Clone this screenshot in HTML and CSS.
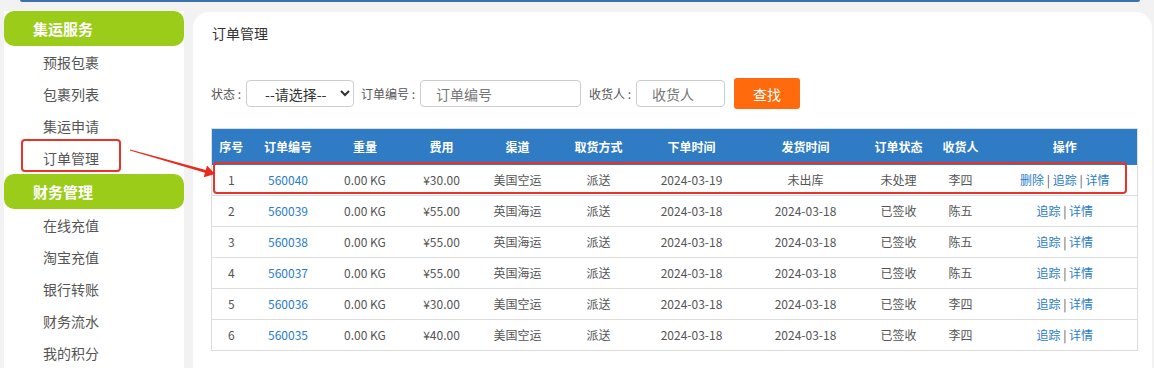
FILE: index.html
```
<!DOCTYPE html>
<html lang="zh-CN">
<head>
    <meta charset="UTF-8">
    <meta name="viewport" content="width=device-width, initial-scale=1.0">
    <title>订单管理</title>
    <link rel="stylesheet" href="styles.css">
</head>
<body>

    <div class="topbar"></div>

    <div class="wrap">
        <!-- left menu -->
        <div class="sidebar">
            <div class="menu-title">集运服务</div>
            <a class="menu-item">预报包裹</a>
            <a class="menu-item">包裹列表</a>
            <a class="menu-item">集运申请</a>
            <a class="menu-item">订单管理</a>
            <div class="menu-title">财务管理</div>
            <a class="menu-item">在线充值</a>
            <a class="menu-item">淘宝充值</a>
            <a class="menu-item">银行转账</a>
            <a class="menu-item">财务流水</a>
            <a class="menu-item">我的积分</a>

            <div class="mark mark-menu"></div>
        </div>

        <!-- content -->
        <div class="main">
            <div class="page-title">订单管理</div>

            <div class="search">
                <span class="label">状态 :</span>
                <select class="field select">
                    <option>--请选择--</option>
                </select>
                <span class="label">订单编号 :</span>
                <input class="field input-no" type="text" placeholder="订单编号">
                <span class="label">收货人 :</span>
                <input class="field input-name" type="text" placeholder="收货人">
                <button class="btn-search">查找</button>
            </div>

            <div class="table-box">
                <table class="orders">
                    <colgroup>
                        <col style="width:39px">
                        <col style="width:75px">
                        <col style="width:79px">
                        <col style="width:74px">
                        <col style="width:78px">
                        <col style="width:84px">
                        <col style="width:102px">
                        <col style="width:126px">
                        <col style="width:60px">
                        <col style="width:64px">
                        <col>
                    </colgroup>
                    <thead>
                        <tr>
                            <th>序号</th>
                            <th>订单编号</th>
                            <th>重量</th>
                            <th>费用</th>
                            <th>渠道</th>
                            <th>取货方式</th>
                            <th>下单时间</th>
                            <th>发货时间</th>
                            <th>订单状态</th>
                            <th>收货人</th>
                            <th>操作</th>
                        </tr>
                    </thead>
                    <tbody>
                        <tr>
                            <td>1</td>
                            <td><a class="link">560040</a></td>
                            <td>0.00 KG</td>
                            <td>¥30.00</td>
                            <td>美国空运</td>
                            <td>派送</td>
                            <td>2024-03-19</td>
                            <td>未出库</td>
                            <td>未处理</td>
                            <td>李四</td>
                            <td><a class="link">删除</a> | <a class="link">追踪</a> | <a class="link">详情</a></td>
                        </tr>
                        <tr>
                            <td>2</td>
                            <td><a class="link">560039</a></td>
                            <td>0.00 KG</td>
                            <td>¥55.00</td>
                            <td>英国海运</td>
                            <td>派送</td>
                            <td>2024-03-18</td>
                            <td>2024-03-18</td>
                            <td>已签收</td>
                            <td>陈五</td>
                            <td><a class="link">追踪</a> | <a class="link">详情</a></td>
                        </tr>
                        <tr>
                            <td>3</td>
                            <td><a class="link">560038</a></td>
                            <td>0.00 KG</td>
                            <td>¥55.00</td>
                            <td>英国海运</td>
                            <td>派送</td>
                            <td>2024-03-18</td>
                            <td>2024-03-18</td>
                            <td>已签收</td>
                            <td>陈五</td>
                            <td><a class="link">追踪</a> | <a class="link">详情</a></td>
                        </tr>
                        <tr>
                            <td>4</td>
                            <td><a class="link">560037</a></td>
                            <td>0.00 KG</td>
                            <td>¥55.00</td>
                            <td>英国海运</td>
                            <td>派送</td>
                            <td>2024-03-18</td>
                            <td>2024-03-18</td>
                            <td>已签收</td>
                            <td>陈五</td>
                            <td><a class="link">追踪</a> | <a class="link">详情</a></td>
                        </tr>
                        <tr>
                            <td>5</td>
                            <td><a class="link">560036</a></td>
                            <td>0.00 KG</td>
                            <td>¥30.00</td>
                            <td>美国空运</td>
                            <td>派送</td>
                            <td>2024-03-18</td>
                            <td>2024-03-18</td>
                            <td>已签收</td>
                            <td>李四</td>
                            <td><a class="link">追踪</a> | <a class="link">详情</a></td>
                        </tr>
                        <tr>
                            <td>6</td>
                            <td><a class="link">560035</a></td>
                            <td>0.00 KG</td>
                            <td>¥40.00</td>
                            <td>美国空运</td>
                            <td>派送</td>
                            <td>2024-03-18</td>
                            <td>2024-03-18</td>
                            <td>已签收</td>
                            <td>李四</td>
                            <td><a class="link">追踪</a> | <a class="link">详情</a></td>
                        </tr>
                    </tbody>
                </table>

                <div class="mark mark-row"></div>
            </div>
        </div>
    </div>

    <!-- annotation arrow -->
    <svg class="arrow" width="1154" height="368" viewBox="0 0 1154 368">
        <polygon points="130.1,149.6 205.8,169.9 207,165.4 215,174 203.8,177.2 205,172.7 129.9,150.4" fill="#e82a1f"/>
    </svg>

</body>
</html>
```

FILE: styles.css
```
html, body {
    height: 368px;
}

body {
    margin: 0;
    background-color: #f2f2f2;
    font-family: "Noto Sans CJK SC", "Noto Sans", sans-serif;
    color: #555;
    position: relative;
    overflow: hidden;
}

a {
    text-decoration: none;
}

.topbar {
    height: 2px;
    margin: 0 14px 0 20px;
    background-color: #3d72ab;
    border-radius: 0 0 3px 3px;
}

.wrap {
    display: flex;
    padding-top: 9px;
    height: 357px;
    align-items: stretch;
}

/* left menu */
.sidebar {
    position: relative;
    width: 180px;
    margin-left: 4px;
    background-color: #fff;
    overflow: hidden;
}

.menu-title {
    height: 35px;
    line-height: 35px;
    padding-left: 29px;
    background-color: #9bcc1a;
    border-radius: 10px;
    color: #fff;
    font-size: 15px;
    font-weight: bold;
}

.menu-item {
    display: block;
    height: 32px;
    line-height: 32px;
    padding-left: 39px;
    font-size: 14px;
    color: #555;
}

.mark {
    position: absolute;
    border: 2px solid #e8322a;
    border-radius: 4px;
    pointer-events: none;
}

.mark-menu {
    left: 17px;
    top: 128px;
    width: 96px;
    height: 29px;
}

/* content */
.main {
    flex: 1;
    margin-left: 9px;
    margin-right: 2px;
    margin-top: 1px;
    padding: 12px 14px 0 18px;
    background-color: #fff;
    border-radius: 16px 16px 0 0;
    overflow: hidden;
}

.page-title {
    font-size: 14px;
    line-height: 18px;
    color: #333;
    padding-left: 1px;
}

.search {
    display: flex;
    align-items: center;
    height: 31px;
    margin-top: 36px;
}

.label {
    font-size: 12px;
    color: #555;
    white-space: pre;
    margin-right: 5px;
}

.field {
    box-sizing: border-box;
    height: 27px;
    border: 1px solid #ccc;
    border-radius: 4px;
    background-color: #fff;
    font-family: inherit;
    font-size: 14px;
    color: #333;
    margin-right: 7px;
}

.field::placeholder {
    color: #777;
}

.select {
    width: 108px;
    padding-left: 14px;
}

.input-no {
    width: 161px;
    padding-left: 15px;
    margin-right: 8px;
}

.input-name {
    width: 89px;
    padding-left: 15px;
}

.btn-search {
    width: 66px;
    height: 31px;
    margin-left: 2px;
    border: none;
    border-radius: 3px;
    background-color: #fe6a0c;
    color: #fff;
    font-family: inherit;
    font-size: 14px;
}

.table-box {
    position: relative;
    margin-top: 19px;
    width: 927px;
}

.orders {
    width: 927px;
    table-layout: fixed;
    border-collapse: collapse;
    border: 1px solid #ddd;
    font-size: 12px;
}

.orders th {
    height: 35px;
    padding: 0 0 1px;
    background-color: #2f7bc4;
    color: #fff;
    font-weight: bold;
    text-align: center;
}

.orders td {
    height: 28px;
    padding: 0 0 2px;
    text-align: center;
    border-bottom: 1px solid #ddd;
    color: #555;
    white-space: nowrap;
}

.link {
    color: #2a7cca;
}

.mark-row {
    left: 2px;
    top: 34px;
    width: 910px;
    height: 28px;
}

.arrow {
    position: absolute;
    top: 0;
    left: 0;
    pointer-events: none;
}
```
